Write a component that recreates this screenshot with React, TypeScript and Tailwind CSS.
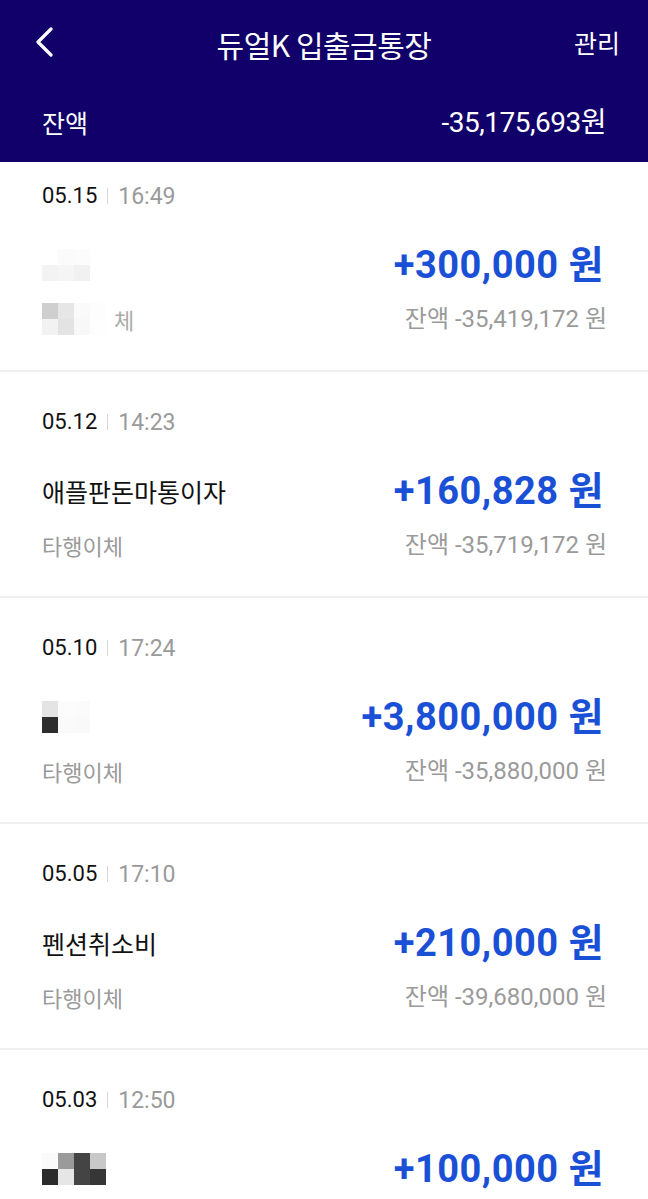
const font = { fontFamily: '"Noto Sans CJK KR", "Noto Sans", sans-serif' };
const numFont = { fontFamily: 'Roboto, "Noto Sans CJK KR", sans-serif' };

type Tx = {
  date: string;
  time: string;
  name?: string;
  mosaic?: string[][];
  subMosaic?: string[][];
  sub?: string;
  amount: string;
  balance?: string;
};

const txs: Tx[] = [
  {
    date: "05.15",
    time: "16:49",
    mosaic: [
      ["#ffffff", "#fbfbfb", "#fcfcfc"],
      ["#f3f3f3", "#f5f5f5", "#f1f1f1"],
    ],
    subMosaic: [
      ["#cfcfcf", "#e6e6e6", "#fafafa", "#fdfdfd"],
      ["#f2f2f2", "#e3e3e3", "#f8f8f8", "#fefefe"],
    ],
    amount: "+300,000 원",
    balance: "잔액 -35,419,172 원",
  },
  {
    date: "05.12",
    time: "14:23",
    name: "애플판돈마통이자",
    sub: "타행이체",
    amount: "+160,828 원",
    balance: "잔액 -35,719,172 원",
  },
  {
    date: "05.10",
    time: "17:24",
    mosaic: [
      ["#e4e4e4", "#fcfcfc", "#fbfbfb"],
      ["#2e2e2e", "#fafafa", "#f9f9f9"],
    ],
    sub: "타행이체",
    amount: "+3,800,000 원",
    balance: "잔액 -35,880,000 원",
  },
  {
    date: "05.05",
    time: "17:10",
    name: "펜션취소비",
    sub: "타행이체",
    amount: "+210,000 원",
    balance: "잔액 -39,680,000 원",
  },
  {
    date: "05.03",
    time: "12:50",
    mosaic: [
      ["#fafafa", "#9a9a9a", "#444444", "#c8c8c8"],
      ["#2b2b2b", "#e6e6e6", "#444444", "#363636"],
    ],
    amount: "+100,000 원",
  },
];

function Mosaic({ cells }: { cells: string[][] }) {
  return (
    <div className="flex flex-col">
      {cells.map((row, i) => (
        <div key={i} className="flex">
          {row.map((c, j) => (
            <div key={j} className="w-[16px] h-[16px]" style={{ backgroundColor: c }} />
          ))}
        </div>
      ))}
    </div>
  );
}

function Row({ tx, first }: { tx: Tx; first: boolean }) {
  return (
    <div className={`${first ? "pt-[20px]" : "pt-[36px]"} pb-[36px] pl-[42px] pr-[44px] border-b-2 border-[#f0f0f0]`}>
      <div className="flex items-center h-[28px] text-[22px] leading-none" style={numFont}>
        <span className="text-[#111]">{tx.date}</span>
        <span className="mx-[10px] w-px h-[16px] bg-[#d8d8d8]" />
        <span className="text-[#9a9a9a] text-[23px]">{tx.time}</span>
      </div>
      <div className="mt-[35px] flex items-center justify-between h-[40px]">
        {tx.name ? (
          <span className="text-[25px] text-[#111] leading-none">{tx.name}</span>
        ) : tx.mosaic ? (
          <Mosaic cells={tx.mosaic} />
        ) : (
          <span />
        )}
        <span className="text-[38px] font-bold text-[#1a50d6] leading-none tracking-[0.5px]" style={numFont}>
          {tx.amount}
        </span>
      </div>
      {(tx.sub || tx.subMosaic || tx.balance) && (
        <div className="mt-[19px] flex items-center justify-between h-[30px] text-[22px] text-[#9a9a9a] leading-none">
          {tx.sub ? (
            <span>{tx.sub}</span>
          ) : tx.subMosaic ? (
            <div className="flex items-center">
              <Mosaic cells={tx.subMosaic} />
              <span className="text-[#aaa] ml-[8px]">체</span>
            </div>
          ) : (
            <span />
          )}
          <span className="text-[24px] -mr-[3px]" style={numFont}>{tx.balance}</span>
        </div>
      )}
    </div>
  );
}

export default function App() {
  return (
    <div className="w-[648px] h-[1199px] overflow-hidden bg-white" style={font}>
      <div className="bg-[#12006a] text-white h-[162px]">
        <div className="relative flex items-center justify-center h-[88px]">
          <svg className="absolute left-[33px] top-[27px]" width="22" height="30" viewBox="0 0 22 30">
            <path d="M18 2 L5 15 L18 28" fill="none" stroke="white" strokeWidth="3.2" strokeLinecap="round" strokeLinejoin="round" />
          </svg>
          <span className="text-[30px] tracking-[-0.5px]">듀얼K 입출금통장</span>
          <span className="absolute right-[28px] top-[24px] text-[25px]">관리</span>
        </div>
        <div className="flex items-center justify-between pl-[42px] pr-[42px] h-[70px] text-[25px]">
          <span>잔액</span>
          <span className="text-[28px] tracking-[-0.5px]" style={numFont}>-35,175,693원</span>
        </div>
      </div>
      {txs.map((tx, i) => (
        <Row key={i} tx={tx} first={i === 0} />
      ))}
    </div>
  );
}
